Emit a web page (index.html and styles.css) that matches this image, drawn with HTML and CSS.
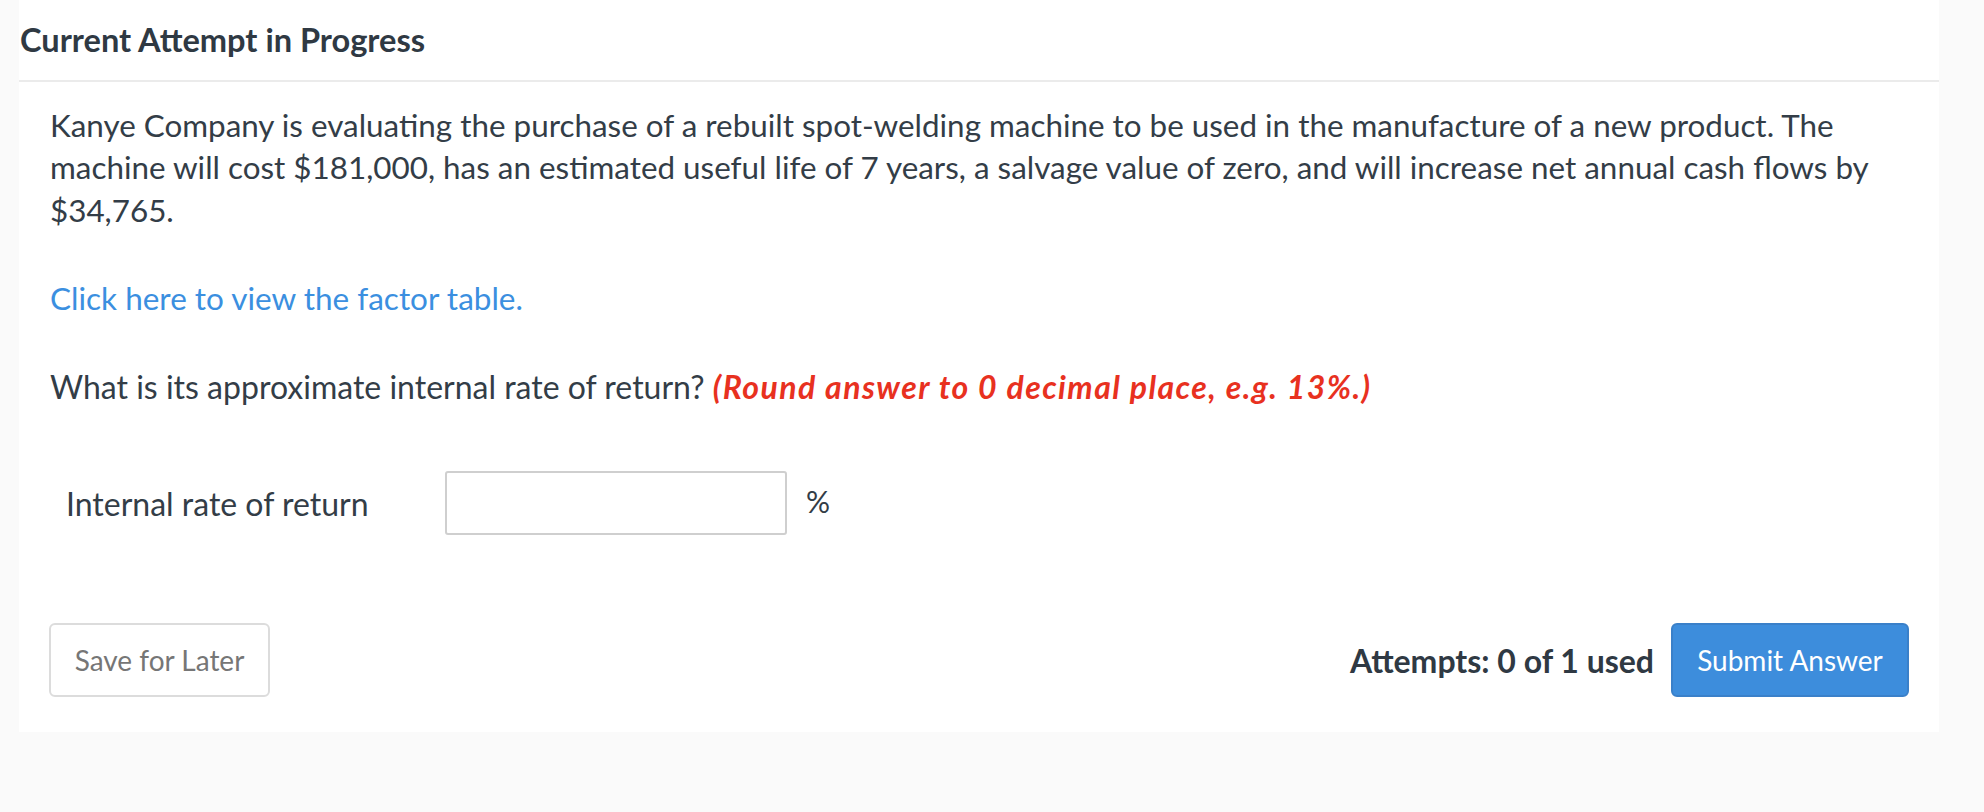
FILE: index.html
```html
<!DOCTYPE html>
<html>
<head>
<meta charset="utf-8">
<link rel="stylesheet" href="styles.css">
</head>
<body>
<div class="card">
  <div class="header"><h1 class="title">Current Attempt in Progress</h1></div>
  <div class="content">
    <p class="para">Kanye Company is evaluating the purchase of a rebuilt spot-welding machine to be used in the manufacture of a new product. The machine will cost $181,000, has an estimated useful life of 7 years, a salvage value of zero, and will increase net annual cash flows by $34,765.</p>
    <p class="link-line"><a class="link" href="#">Click here to view the factor table.</a></p>
    <p class="question">What is its approximate internal rate of return? <span class="hint">(Round answer to 0 decimal place, e.g. 13%.)</span></p>
    <div class="answer-row">
      <span class="label">Internal rate of return</span>
      <input class="input" type="text">
      <span class="unit">%</span>
    </div>
    <div class="actions">
      <button class="btn btn-save">Save for Later</button>
      <div class="right">
        <span class="attempts">Attempts: 0 of 1 used</span>
        <button class="btn btn-submit">Submit Answer</button>
      </div>
    </div>
  </div>
</div>
</body>
</html>
```
FILE: styles.css
```css
html, body {
  margin: 0;
  padding: 0;
  background: #fafafa;
}
body {
  font-family: Lato, "Open Sans", sans-serif;
  color: #333d47;
}
.card {
  margin-left: 19px;
  width: 1920px;
  background: #ffffff;
  padding-bottom: 35px;
}
.header {
  height: 80px;
  border-bottom: 2px solid #ebebeb;
  display: flex;
  align-items: center;
}
.title {
  margin: 0;
  padding-left: 1px;
  font-size: 32.6px;
  font-weight: 700;
  line-height: 1;
  color: #2f3943;
}
.content {
  padding: 22px 30px 0 31px;
}
.para {
  margin: 0;
  font-size: 31.4px;
  line-height: 42.4px;
}
.link-line {
  margin: 46px 0 0 0;
  font-size: 31.5px;
  line-height: 42px;
}
.link {
  color: #3b8fe0;
  text-decoration: none;
}
.question {
  margin: 47px 0 0 0;
  font-size: 32px;
  line-height: 42px;
}
.hint {
  color: #e8311f;
  font-weight: 700;
  font-style: italic;
  letter-spacing: 1.43px;
}
.answer-row {
  display: flex;
  align-items: center;
  margin-top: 63px;
  padding-left: 16px;
}
.label {
  font-size: 32px;
  width: 379px;
}
.input {
  width: 342px;
  height: 64px;
  box-sizing: border-box;
  border: 2px solid #cfcfcf;
  border-radius: 3px;
  margin: 0;
  padding: 0 10px;
  font-family: inherit;
  font-size: 28px;
}
.unit {
  font-size: 30px;
  margin-left: 19px;
  margin-bottom: 4px;
}
.actions {
  display: flex;
  justify-content: space-between;
  align-items: center;
  margin-top: 88px;
  margin-left: -1px;
}
.right {
  display: flex;
  align-items: center;
  gap: 17px;
}
.btn {
  font-family: Lato, sans-serif;
  font-size: 28px;
  height: 74px;
  border-radius: 6px;
  cursor: pointer;
  padding: 0;
}
.btn-save {
  width: 221px;
  background: #ffffff;
  border: 2px solid #dcdcdc;
  color: #767676;
}
.btn-submit {
  width: 238px;
  background: #3d8ddc;
  border: 2px solid #3a80c9;
  color: #ffffff;
}
.attempts {
  font-size: 32px;
  font-weight: 700;
  color: #2f3943;
}
```
